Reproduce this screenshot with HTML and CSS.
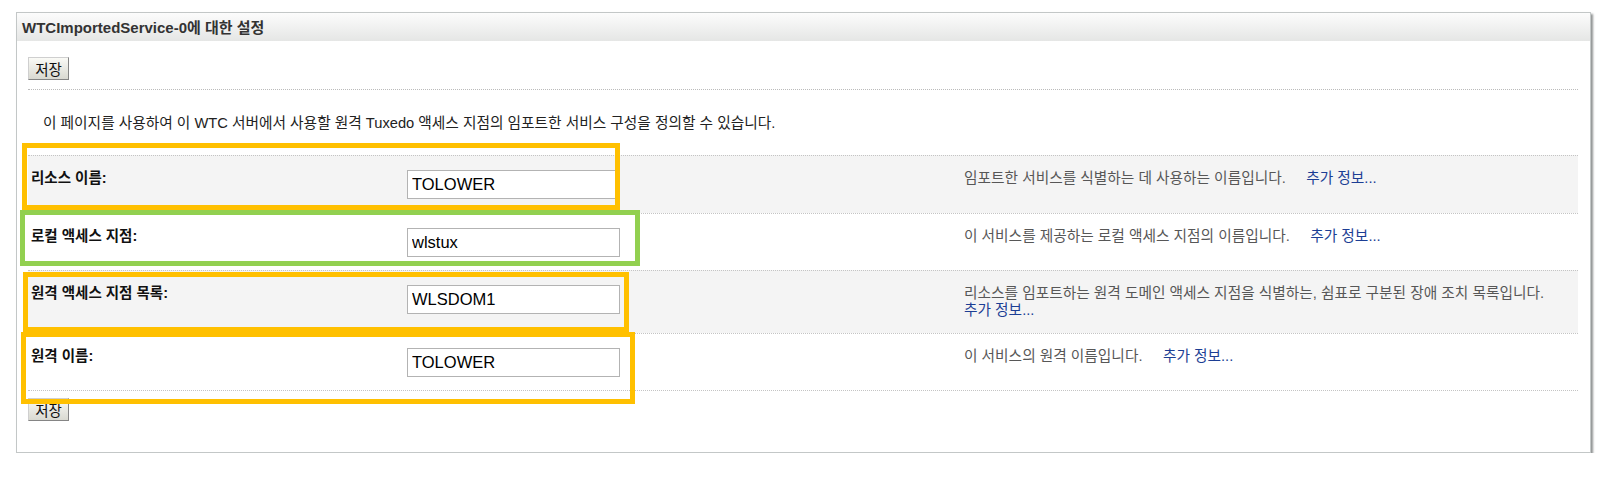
FILE: index.html
```html
<!DOCTYPE html>
<html lang="ko">
<head>
  <meta charset="UTF-8" />
  <meta name="viewport" content="width=device-width, initial-scale=1.0"/>
  <title>WTCImportedService-0에 대한 설정</title>
  <link rel="stylesheet" href="styles.css">
</head>
<body>
  <div class="panel">
    <div class="panel-head">
      <h2>WTCImportedService-0에 대한 설정</h2>
    </div>

    <div class="panel-body">
      <div class="toolbar">
        <button type="button">저장</button>
      </div>

      <p class="intro">이 페이지를 사용하여 이 WTC 서버에서 사용할 원격 Tuxedo 액세스 지점의 임포트한 서비스 구성을 정의할 수 있습니다.</p>

      <div class="fields">
        <div class="field alt">
          <label class="field-label" for="resName">리소스 이름:</label>
          <div><input type="text" id="resName" value="TOLOWER" /></div>
          <p class="help">임포트한 서비스를 식별하는 데 사용하는 이름입니다.&nbsp;&nbsp;&nbsp;&nbsp; <a href="#">추가 정보...</a></p>
        </div>

        <div class="field">
          <label class="field-label" for="localAp">로컬 액세스 지점:</label>
          <div><input type="text" id="localAp" value="wlstux" /></div>
          <p class="help">이 서비스를 제공하는 로컬 액세스 지점의 이름입니다.&nbsp;&nbsp;&nbsp;&nbsp; <a href="#">추가 정보...</a></p>
        </div>

        <div class="field alt">
          <label class="field-label" for="remoteList">원격 액세스 지점 목록:</label>
          <div><input type="text" id="remoteList" value="WLSDOM1" /></div>
          <p class="help">리소스를 임포트하는 원격 도메인 액세스 지점을 식별하는, 쉼표로 구분된 장애 조치 목록입니다.&nbsp;&nbsp;&nbsp;&nbsp; <a href="#">추가 정보...</a></p>
        </div>

        <div class="field">
          <label class="field-label" for="remoteName">원격 이름:</label>
          <div><input type="text" id="remoteName" value="TOLOWER" /></div>
          <p class="help">이 서비스의 원격 이름입니다.&nbsp;&nbsp;&nbsp;&nbsp; <a href="#">추가 정보...</a></p>
        </div>
      </div>

      <div class="toolbar toolbar-bottom">
        <button type="button">저장</button>
      </div>
    </div>
  </div>

  <!-- highlight boxes drawn over the form -->
  <div class="mark mark-1"></div>
  <div class="mark mark-2"></div>
  <div class="mark mark-3"></div>
  <div class="mark mark-4"></div>
</body>
</html>
```

FILE: styles.css
```css
body {
  margin: 0;
  position: relative;
  font-family: "Liberation Sans", "Noto Sans CJK KR", sans-serif;
  font-size: 14.7px;
  color: #222;
  background: #fff;
}

.panel {
  margin: 12px 0 0 16px;
  width: 1573px;
  border: 1px solid #c3c7c7;
  box-shadow: 2px 2px 2px rgba(70, 75, 75, 0.6);
}

.panel-head {
  height: 28px;
  padding-left: 5px;
  background: linear-gradient(#fcfcfc, #e5e6e5);
}

.panel-head h2 {
  margin: 0;
  font-size: 15px;
  line-height: 29px;
  font-weight: bold;
  color: #333;
}

.panel-body {
  padding: 16px 12px 31px 11px;
}

.toolbar {
  display: flex;
  padding-bottom: 9px;
  border-bottom: 1px dotted #bbb;
}

.toolbar-bottom {
  margin-top: 7px;
  padding-bottom: 0;
  border-bottom: none;
}

button {
  width: 41px;
  height: 23px;
  padding: 0;
  font-family: "Noto Sans CJK KR", sans-serif;
  font-size: 14.5px;
  line-height: 20px;
  color: #111;
  border: 1px solid;
  border-color: #cfcfcf #858585 #858585 #cfcfcf;
  background: linear-gradient(#fafaf6, #d9d9d1);
}

.intro {
  margin: 25px 0 23px 15px;
  line-height: 17px;
  color: #222;
}

.fields {
  border-bottom: 1px dotted #c4c4c4;
}

.field {
  display: grid;
  grid-template-columns: 379px 557px 1fr;
  border-top: 1px dotted #c4c4c4;
  padding: 14px 0 13.5px;
}

.field.alt {
  background: #f4f4f4;
}

.field-label {
  padding-left: 3px;
  font-size: 14.5px;
  font-weight: bold;
  line-height: 17px;
  color: #111;
}

.field input {
  display: block;
  box-sizing: border-box;
  width: 213px;
  height: 29px;
  margin: 0;
  padding: 0 4px;
  border: 1px solid #b3b3b3;
  font-family: "Liberation Sans", sans-serif;
  font-size: 16.5px;
  color: #000;
  background: #fff;
}

.help {
  margin: 0;
  line-height: 17px;
  color: #575757;
  word-break: keep-all;
}

.help a {
  color: #1c3e94;
  text-decoration: none;
  white-space: nowrap;
}

.mark {
  position: absolute;
  box-sizing: border-box;
  border: 5px solid #ffc000;
}

.mark-1 {
  left: 22px;
  top: 143px;
  width: 598px;
  height: 67px;
}

.mark-2 {
  left: 20px;
  top: 210px;
  width: 620px;
  height: 56px;
  border-color: #92d050;
}

.mark-3 {
  left: 23px;
  top: 272px;
  width: 606px;
  height: 60px;
}

.mark-4 {
  left: 21px;
  top: 332px;
  width: 614px;
  height: 72px;
}
```
